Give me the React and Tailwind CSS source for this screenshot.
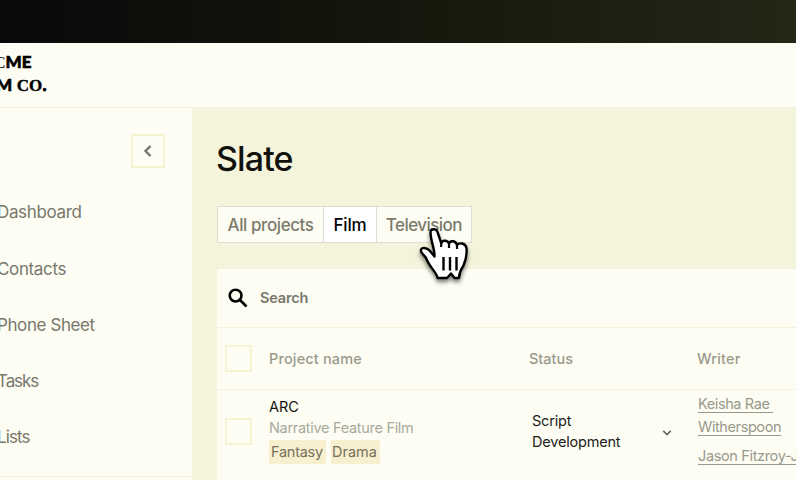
import React from 'react';

const NAV = [
  { label: 'Dashboard',   className: 'tracking-[-0.36px]' },
  { label: 'Contacts',    className: 'tracking-[-0.36px]' },
  { label: 'Phone Sheet', className: 'tracking-[-0.4px]' },
  { label: 'Tasks',       className: 'tracking-[-1.1px]' },
  { label: 'Lists',       className: 'tracking-[-0.9px]' },
];

const TABS = [
  { label: 'All projects', className: 'w-[107px] text-[#7b7b6c] tracking-[-0.42px]' },
  { label: 'Film',         className: 'w-[53px] bg-white text-black tracking-[-0.2px]' },
  { label: 'Television',   className: 'w-[95px] text-[#7b7b6c] tracking-[-0.56px]' },
];

const Chevron = ({ className, d, strokeWidth = 2 }) => (
  <svg className={className} viewBox="0 0 12 12" fill="none" stroke="currentColor" strokeWidth={strokeWidth}>
    <path d={d} />
  </svg>
);

const Checkbox = () => <span className="block w-[27px] h-[27px] shrink-0 border-2 border-[#f4f4d2]" />;

const HandCursor = () => (
  <svg className="absolute left-[416px] top-[222px] w-[60px] h-[66px] drop-shadow-[0_3px_2px_rgba(0,0,0,0.5)]" viewBox="0 0 60 66" fill="none">
    <path
      d="M14.5 10C14.5 6.4 20.5 6.4 21.5 10L25.2 21C26.5 18 31.5 18 33 21.5C34.5 18 39.8 18.5 41 23C43 20.5 49.5 20.5 50.5 26C51 32 50 38 47.5 43.5C45.5 46.5 43.2 49.5 43 56H38.5L35 51.5L31 56H21.5C21 50.5 14 46 10.5 37C9.3 33.5 4.8 31.5 4.8 28.5C5.2 24.5 11 25.5 14 29L18.5 34.5C19 27 14.5 19 14.5 10Z"
      fill="white" stroke="black" strokeWidth="2.4" strokeLinejoin="round"
    />
    <path d="M27.5 35V48.5M34 35V48.5M40.5 35V48.5" stroke="black" strokeWidth="2.4" />
    <path d="M25.2 21V25M33 21.5V26M41 23V27" stroke="black" strokeWidth="2.2" />
  </svg>
);

export default function App() {
  return (
    <div className="relative w-[796px] h-[480px] overflow-hidden flex flex-col bg-[#fdfdf4] font-['Inter',sans-serif] whitespace-nowrap">
      <div className="h-[43px] shrink-0 bg-linear-to-r from-[#09090a] via-[#16160c] to-[#262617]" />

      <header className="h-[65px] shrink-0 border-b border-[#f3f3dc] pt-[8px]">
        <div className="w-[60px] font-['Lato',sans-serif] font-black text-black text-[17px] leading-[22px]">
          <div className="-ml-[6px] tracking-[0.1px]">
            <span className="font-['Liberation_Serif',serif] font-normal">C</span>
            <span className="[-webkit-text-stroke:0.6px_black]">ME</span>
          </div>
          <div className="-ml-[4px] tracking-[0.2px]">
            <span className="[-webkit-text-stroke:0.6px_black]">M</span>{' '}
            <span className="font-['Liberation_Serif',serif] font-bold tracking-[0.2px] [-webkit-text-stroke:0.4px_black]">CO</span>
            <span className="[-webkit-text-stroke:0.8px_black]">.</span>
          </div>
        </div>
      </header>

      <div className="flex flex-1 min-h-0">
        {/* Sidebar */}
        <aside className="w-[192px] shrink-0 flex flex-col pt-[26px]">
          <button className="ml-[131px] w-[34px] h-[34px] flex items-center justify-center border-2 border-[#f4f4d2] text-[#77776c]">
            <Chevron className="w-3 h-3" d="M8.5 1L3.5 6L8.5 11" strokeWidth={2.4} />
          </button>
          <nav className="mt-[17px] h-[281px] -ml-[3px] flex flex-col text-[17px] text-[#77776b]">
            {NAV.map(n => (
              <a key={n.label} className={`flex-1 flex items-center ${n.className}`}>{n.label}</a>
            ))}
          </nav>
          <div className="mt-[10px] border-t border-[#f4f4dc]" />
        </aside>

        {/* Main */}
        <main className="flex-1 min-w-0 pl-[25px] bg-[#f4f4dc]">
          <h1 className="pt-[29px] -ml-px text-[34px] leading-[44px] font-medium tracking-[-0.9px] text-[#11120c]">Slate</h1>

          <div className="mt-[25px] flex w-[255px] h-[37px] border border-[#dcdcd0] bg-[#fdfdf4] divide-x divide-[#dcdcd0] text-[17px] font-medium">
            {TABS.map(t => (
              <div key={t.label} className={`flex items-center justify-center pt-[2px] ${t.className}`}>{t.label}</div>
            ))}
          </div>

          <section className="mt-[26px] h-[220px] bg-[#fdfdf4]">
            <div className="h-[59px] flex items-center pl-[11px] border-b border-[#f3f3dc]">
              <svg className="w-5 h-5" viewBox="0 0 20 20" fill="none" stroke="black" strokeWidth="2.6">
                <circle cx="7.6" cy="7.6" r="5.9" />
                <path d="M12 12L18.5 18.5" />
              </svg>
              <span className="ml-[12px] text-[14.5px] font-semibold tracking-[-0.15px] text-[#77776b]">Search</span>
            </div>

            <div className="h-[62px] flex items-center pl-[8px] border-b border-[#f3f3dc] text-[14.5px] font-medium text-[#9a9a8c]">
              <Checkbox />
              <span className="ml-[17px] w-[260px] tracking-[0.15px]">Project name</span>
              <span className="w-[168px] tracking-[0px]">Status</span>
              <span className="tracking-[0.2px]">Writer</span>
            </div>

            <div className="flex pl-[8px] h-[92px]">
              <div className="pt-[28px]"><Checkbox /></div>
              <div className="ml-[17px] w-[263px] shrink-0 pt-[6px]">
                <div className="text-[14.5px] leading-[21px] tracking-[0px] text-[#151510]">ARC</div>
                <div className="text-[14.5px] leading-[21px] tracking-[-0.3px] text-[#a9a99b]">Narrative Feature Film</div>
                <div className="flex gap-[5px] mt-[2px] text-[14.5px] leading-[24px] text-[#77705d]">
                  <span className="w-[57px] pl-[2px] bg-[#f8efcf] tracking-[-0.25px]">Fantasy</span>
                  <span className="w-[49px] pl-[1px] bg-[#f8efcf] tracking-[0px]">Drama</span>
                </div>
              </div>
              <div className="w-[130px] shrink-0 pt-[20px] text-[14.5px] leading-[21px] tracking-[-0.2px] text-[#22221a]">
                <div>Script</div>
                <div>Development</div>
              </div>
              <div className="w-[36px] shrink-0 pt-[38px] text-[#66665c]">
                <Chevron className="w-[10px] h-[10px]" d="M1.5 3.5L6 8L10.5 3.5" />
              </div>
              <div className="w-[98px] shrink-0 overflow-hidden pt-[2px] text-[14.5px] leading-[23px] text-[#99998b] underline underline-offset-[3px] decoration-1">
                <div className="tracking-[-0.4px] whitespace-pre">{'Keisha Rae '}</div>
                <div className="tracking-[-0.4px]">Witherspoon</div>
                <div className="mt-[6px] tracking-[-0.35px]">Jason Fitzroy-J</div>
              </div>
            </div>
          </section>
        </main>
      </div>

      <HandCursor />
    </div>
  );
}
